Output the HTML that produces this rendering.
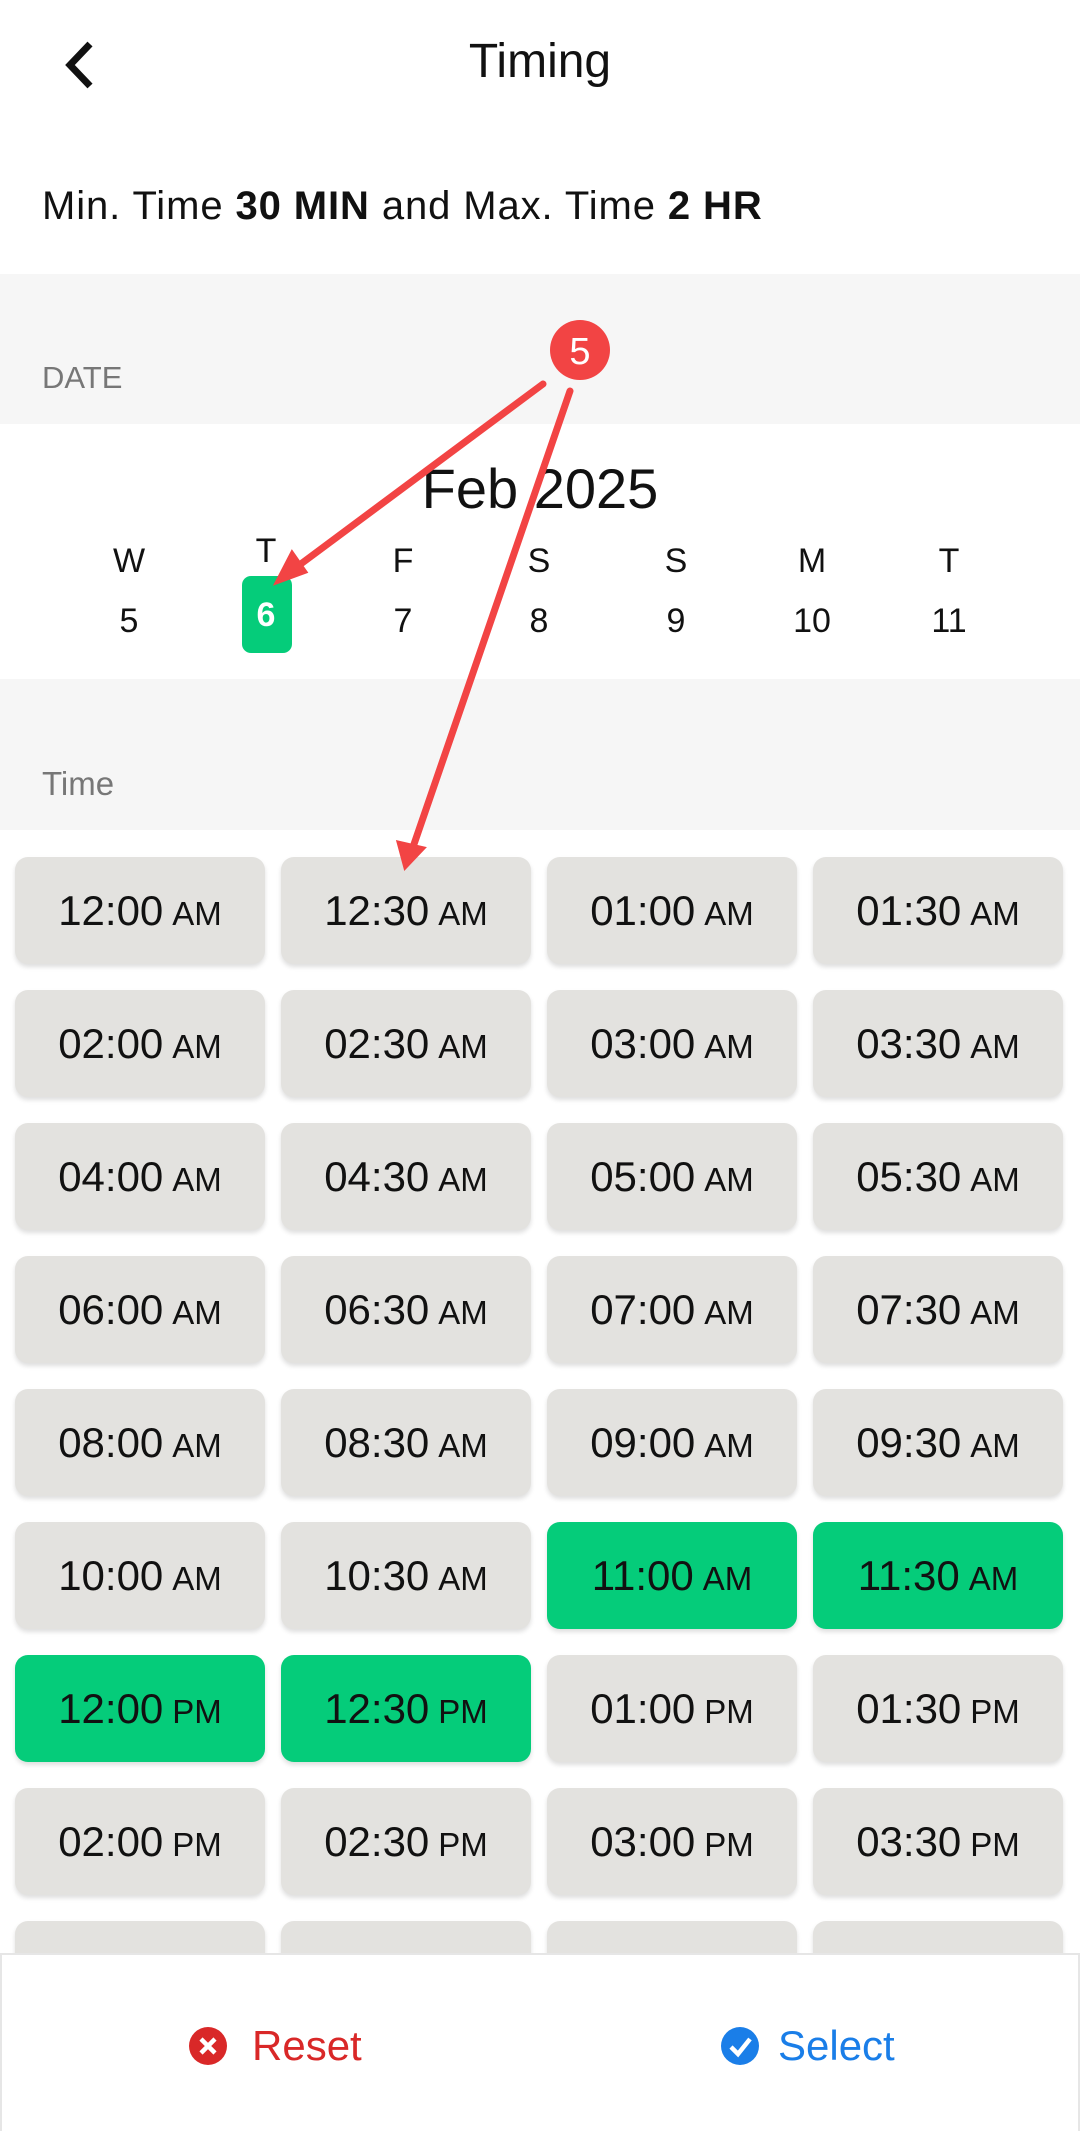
<!DOCTYPE html>
<html><head><meta charset="utf-8"><style>
*{margin:0;padding:0;box-sizing:border-box}
body{width:1080px;height:2131px;overflow:hidden;background:#fff;font-family:"Liberation Sans",sans-serif;position:relative;color:#111}
.abs{position:absolute}
.band{position:absolute;left:0;width:1080px;background:#f6f6f6}
.btn{position:absolute;width:250px;height:107px;border-radius:13px;background:#e3e2df;box-shadow:0 3px 5px rgba(0,0,0,.13);display:flex;align-items:center;justify-content:center;font-size:42px;color:#111}
.btn span{font-size:33px;margin-left:9px;margin-top:6px}
.g{background:#05cc7a}
.wk{position:absolute;width:80px;text-align:center;font-size:34px}
</style></head><body>
<svg class="abs" style="left:58px;top:40px" width="40" height="50" viewBox="0 0 40 50"><path d="M32 4 L12 25 L32 46" fill="none" stroke="#111" stroke-width="7" stroke-linejoin="miter"/></svg>
<div class="abs" style="left:0;width:1080px;top:34px;text-align:center;font-size:48px;">Timing</div>
<div class="abs" style="left:42px;top:184px;font-size:40px;letter-spacing:0.9px">Min. Time <b>30 MIN</b> and Max. Time <b>2 HR</b></div>
<div class="band" style="top:274px;height:150px"></div>
<div class="abs" style="left:42px;top:360px;font-size:31px;color:#777">DATE</div>
<div class="abs" style="left:0;width:1080px;top:456px;text-align:center;font-size:56px;">Feb 2025</div>
<div class="abs" style="left:242px;top:576px;width:50px;height:77px;border-radius:9px;background:#05cc7a"></div>
<div class="wk" style="left:89px;top:542px">W</div><div class="wk" style="left:89px;top:602px">5</div>
<div class="wk" style="left:226px;top:532px">T</div><div class="wk" style="left:226px;top:596px;color:#fff;font-weight:bold">6</div>
<div class="wk" style="left:363px;top:542px">F</div><div class="wk" style="left:363px;top:602px">7</div>
<div class="wk" style="left:499px;top:542px">S</div><div class="wk" style="left:499px;top:602px">8</div>
<div class="wk" style="left:636px;top:542px">S</div><div class="wk" style="left:636px;top:602px">9</div>
<div class="wk" style="left:772px;top:542px">M</div><div class="wk" style="left:772px;top:602px">10</div>
<div class="wk" style="left:909px;top:542px">T</div><div class="wk" style="left:909px;top:602px">11</div>
<div class="band" style="top:679px;height:151px"></div>
<div class="abs" style="left:42px;top:765px;font-size:33px;color:#777">Time</div>
<div id="grid"></div>
<script>
(function(){
var t=["12:00","12:30","01:00","01:30","02:00","02:30","03:00","03:30","04:00","04:30","05:00","05:30","06:00","06:30","07:00","07:30","08:00","08:30","09:00","09:30","10:00","10:30","11:00","11:30"];
var h="",xs=[15,281,547,813];
for(var i=0;i<36;i++){var r=Math.floor(i/4),c=i%4,yy=857+133*r;var lab,ap;
if(i<24){lab=t[i];ap="AM"}else{lab=t[i-24];ap="PM"}
var g=(i>=22&&i<=25)?" g":"";
h+='<div class="btn'+g+'" style="left:'+xs[c]+'px;top:'+yy+'px">'+lab+'<span>'+ap+'</span></div>';}
document.getElementById("grid").innerHTML=h;
})();
</script>
<div class="abs" style="left:0;top:1953px;width:1080px;height:178px;background:#fff;border:2px solid #e6e6e6;border-bottom:none"></div>
<svg class="abs" style="left:188px;top:2026px" width="40" height="40" viewBox="0 0 40 40"><circle cx="20" cy="20" r="19" fill="#d92828"/><path d="M13 13 L27 27 M27 13 L13 27" stroke="#fff" stroke-width="4.5"/></svg>
<div class="abs" style="left:252px;top:2022px;font-size:42px;color:#d92828">Reset</div>
<svg class="abs" style="left:720px;top:2026px" width="40" height="40" viewBox="0 0 40 40"><circle cx="20" cy="20" r="19" fill="#1a7ee8"/><path d="M11 21 L18 28 L30 13" fill="none" stroke="#fff" stroke-width="4.5"/></svg>
<div class="abs" style="left:778px;top:2022px;font-size:42px;color:#1a7ee8">Select</div>
<svg class="abs" style="left:0;top:0" width="1080" height="1000">
<g stroke="#f24444" stroke-width="7" stroke-linecap="round" fill="#f24444">
<line x1="543" y1="384" x2="290" y2="572"/>
<line x1="570" y1="391" x2="412" y2="850"/>
<polygon points="276,583 292,552 306,572" stroke-width="3"/>
<polygon points="405,868 398,842 424,848" stroke-width="3"/>
</g>
<circle cx="580" cy="350" r="30" fill="#f24444"/>
<text x="580" y="364" text-anchor="middle" font-size="38" fill="#fff" font-family="Liberation Sans">5</text>
</svg>
</body></html>
